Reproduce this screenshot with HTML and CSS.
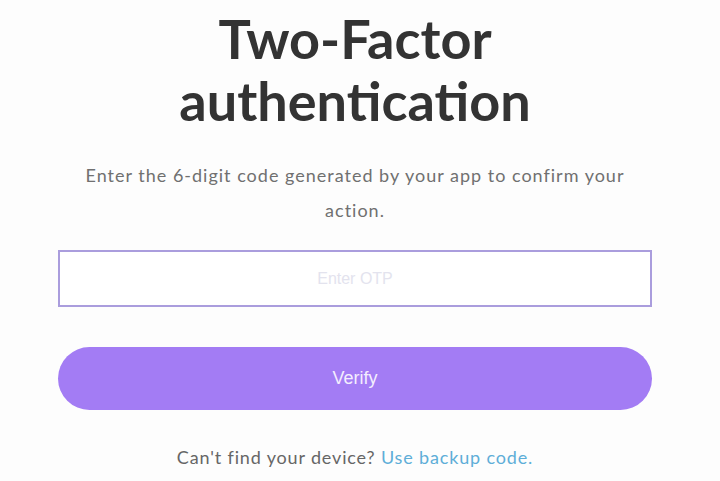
FILE: index.html
```html
<!DOCTYPE html>
<html>
<head>
    <title>Two-Factor authentication</title>
    <link rel="stylesheet" href="styles.css">
</head>
<body>
    <!-- Verificação em duas etapas -->
    <div class="card">
        <h1>Two-Factor authentication</h1>
        <p class="info">Enter the 6-digit code generated by your app to confirm your action.</p>

        <input type="text" class="otp" placeholder="Enter OTP" maxlength="6">

        <button class="verify">Verify</button>

        <p class="backup">Can't find your device? <a href="#">Use backup code.</a></p>
    </div>
</body>
</html>
```

FILE: styles.css
```css
body {
    background-color: #fdfdfd;
    color: #333;
    font-family: Lato, "Noto Sans", sans-serif;
    margin: 0;
    padding: 0;
}
.card {
    width: 594px;
    margin-left: 58px;
    text-align: center;
}
.card h1 {
    font-family: Lato, sans-serif;
    font-weight: 700;
    font-size: 54px;
    line-height: 62px;
    color: #333;
    margin: 8px auto 0;
    width: 400px;
}
.info {
    font-size: 18px;
    letter-spacing: 1px;
    line-height: 35px;
    color: #707070;
    margin: 26px 15px 0;
}
.otp {
    display: block;
    box-sizing: border-box;
    width: 594px;
    height: 57px;
    margin-top: 22px;
    border: 2px solid #aa9ddd;
    background: #fff;
    font-family: "Liberation Sans", Arial, sans-serif;
    font-size: 16px;
    text-align: center;
    outline: none;
}
.otp::placeholder {
    color: #e3e3ee;
}
.verify {
    display: block;
    width: 594px;
    height: 63px;
    margin-top: 40px;
    border: none;
    border-radius: 32px;
    background-color: #a37cf4;
    color: #f4eefe;
    font-family: "Liberation Sans", Arial, sans-serif;
    font-size: 18px;
    cursor: pointer;
}
.backup {
    font-size: 18px;
    letter-spacing: 0.85px;
    color: #666;
    margin-top: 36px;
}
.backup a {
    color: #5eaed8;
    text-decoration: none;
}
```
